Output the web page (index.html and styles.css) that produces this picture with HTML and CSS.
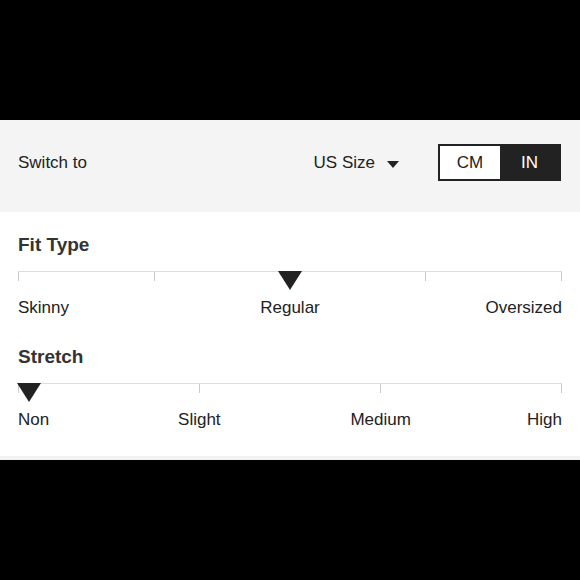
FILE: index.html
```html
<!DOCTYPE html>
<html>
<head>
<meta charset="utf-8">
<link rel="stylesheet" href="styles.css">
</head>
<body>
<div class="panel">
  <div class="header">
    <div class="switch-label">Switch to</div>
    <div class="size-select">
      <span>US Size</span>
      <svg class="caret" width="12" height="7" viewBox="0 0 12 7"><polygon points="0,0 12,0 6,7" fill="#222"/></svg>
    </div>
    <div class="toggle">
      <div class="seg seg-off">CM</div>
      <div class="seg seg-on">IN</div>
    </div>
  </div>
  <div class="content">
    <div class="section">
      <div class="title">Fit Type</div>
      <div class="track">
        <span class="tick"></span><span class="tick"></span><span class="tick"></span><span class="tick"></span><span class="tick"></span>
        <svg class="marker marker-center" width="24" height="19" viewBox="0 0 24 19"><polygon points="0,0 24,0 12,19" fill="#222"/></svg>
      </div>
      <div class="labels labels-4">
        <span class="l-first">Skinny</span>
        <span class="l-mid2">Regular</span>
        <span class="l-last">Oversized</span>
      </div>
    </div>
    <div class="section">
      <div class="title">Stretch</div>
      <div class="track">
        <span class="tick"></span><span class="tick"></span><span class="tick"></span><span class="tick"></span>
        <svg class="marker marker-start" width="24" height="19" viewBox="0 0 24 19"><polygon points="0,0 24,0 12,19" fill="#222"/></svg>
      </div>
      <div class="labels labels-6">
        <span class="l-first">Non</span>
        <span class="l-mid2">Slight</span>
        <span class="l-mid2">Medium</span>
        <span class="l-last">High</span>
      </div>
    </div>
  </div>
  <div class="foot"></div>
</div>
</body>
</html>
```
FILE: styles.css
```css
html, body {
  margin: 0;
  padding: 0;
  background: #000;
  width: 580px;
  height: 580px;
  overflow: hidden;
}
body {
  font-family: "Liberation Sans", Arial, sans-serif;
  color: #222;
  padding-top: 120px;
  box-sizing: border-box;
}
.panel {
  background: #fff;
  width: 580px;
}
.header {
  height: 92px;
  box-sizing: border-box;
  background: #f4f4f4;
  display: flex;
  align-items: center;
  padding: 0 19px 7px 18px;
  font-size: 17px;
}
.switch-label {
  flex: 1;
  line-height: 20px;
}
.size-select {
  display: flex;
  align-items: center;
  line-height: 20px;
  margin-right: 39px;
}
.caret {
  margin-left: 12px;
  margin-top: 4px;
}
.toggle {
  display: flex;
  height: 37px;
  box-sizing: border-box;
  border: 2px solid #222;
}
.seg {
  display: flex;
  align-items: center;
  justify-content: center;
  font-size: 17px;
}
.seg-off {
  width: 60px;
  background: #fff;
  color: #222;
}
.seg-on {
  width: 59px;
  background: #222;
  color: #fff;
}
.content {
  padding: 22px 18px 26px;
}
.section + .section {
  margin-top: 28px;
}
.title {
  font-size: 19px;
  font-weight: bold;
  line-height: 22px;
  color: #333;
}
.track {
  position: relative;
  margin-top: 15px;
  height: 9px;
  border-top: 1px solid #ddd;
  display: flex;
  justify-content: space-between;
}
.tick {
  width: 1px;
  height: 9px;
  background: #ccc;
}
.marker {
  position: absolute;
  top: -1px;
}
.marker-center {
  left: calc(50% - 12px);
}
.marker-start {
  left: -1px;
}
.labels {
  display: grid;
  margin-top: 17px;
  font-size: 17px;
  line-height: 20px;
}
.labels-4 {
  grid-template-columns: repeat(4, 1fr);
}
.labels-6 {
  grid-template-columns: repeat(6, 1fr);
}
.l-first {
  text-align: left;
  white-space: nowrap;
}
.l-mid2 {
  grid-column: span 2;
  text-align: center;
}
.l-last {
  text-align: right;
  white-space: nowrap;
  direction: rtl;
}
.foot {
  height: 4px;
  background: #f2f2f2;
}
```
